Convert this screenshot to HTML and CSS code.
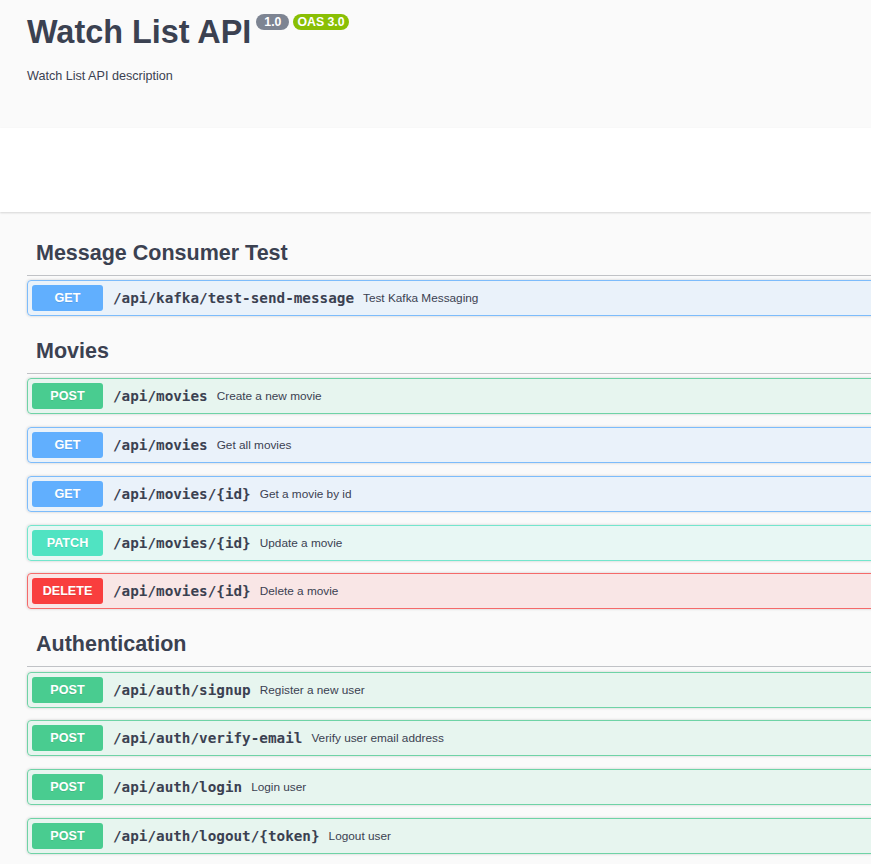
FILE: index.html
```html
<!DOCTYPE html>
<html lang="en">
<head>
<meta charset="utf-8">
<title>Watch List API</title>
<link rel="stylesheet" href="styles.css">
</head>
<body>
<div class="info">
  <h1 class="title"><span>Watch List API</span><span class="badge badge-version">1.0</span><span class="badge badge-oas">OAS 3.0</span></h1>
  <p class="desc">Watch List API description</p>
</div>
<div class="schemes"></div>
<main class="ops">
  <section class="tag-section">
    <h2 class="tag">Message Consumer Test</h2>
    <div class="opblock get"><span class="method">GET</span><span class="path">/api/kafka/test-send-message</span><span class="summary">Test Kafka Messaging</span></div>
  </section>
  <section class="tag-section">
    <h2 class="tag">Movies</h2>
    <div class="opblock post"><span class="method">POST</span><span class="path">/api/movies</span><span class="summary">Create a new movie</span></div>
    <div class="opblock get"><span class="method">GET</span><span class="path">/api/movies</span><span class="summary">Get all movies</span></div>
    <div class="opblock get"><span class="method">GET</span><span class="path">/api/movies/{id}</span><span class="summary">Get a movie by id</span></div>
    <div class="opblock patch"><span class="method">PATCH</span><span class="path">/api/movies/{id}</span><span class="summary">Update a movie</span></div>
    <div class="opblock delete"><span class="method">DELETE</span><span class="path">/api/movies/{id}</span><span class="summary">Delete a movie</span></div>
  </section>
  <section class="tag-section">
    <h2 class="tag">Authentication</h2>
    <div class="opblock post"><span class="method">POST</span><span class="path">/api/auth/signup</span><span class="summary">Register a new user</span></div>
    <div class="opblock post"><span class="method">POST</span><span class="path">/api/auth/verify-email</span><span class="summary">Verify user email address</span></div>
    <div class="opblock post"><span class="method">POST</span><span class="path">/api/auth/login</span><span class="summary">Login user</span></div>
    <div class="opblock post"><span class="method">POST</span><span class="path">/api/auth/logout/{token}</span><span class="summary">Logout user</span></div>
  </section>
</main>
</body>
</html>
```
FILE: styles.css
```css
html, body {
  margin: 0;
  padding: 0;
  overflow: hidden;
  background: #fafafa;
}

body {
  font-family: "Liberation Sans", Arial, Helvetica, sans-serif;
  color: #3b4151;
}

.info {
  background: #fafafa;
  height: 128px;
  box-sizing: border-box;
  padding: 14px 27px 0;
}

.title {
  margin: 0;
  display: flex;
  align-items: flex-start;
  font-size: 32.4px;
  line-height: 36px;
  font-weight: 700;
  color: #3b4151;
}

.badge {
  height: 16px;
  line-height: 16px;
  border-radius: 8px;
  font-size: 12.3px;
  font-weight: 700;
  color: #fff;
}

.badge-version {
  background: #7d8492;
  padding: 0 8px;
  margin-left: 5px;
}

.badge-oas {
  background: #89bf04;
  padding: 0 4px;
  margin-left: 4px;
}

.desc {
  margin: 16.7px 0 0;
  font-size: 12.6px;
  line-height: 18px;
}

.schemes {
  position: relative;
  background: #fff;
  height: 84px;
  box-shadow: 0 1px 2px 0 rgba(0, 0, 0, 0.15);
}

.ops {
  padding: 18.5px 0 0 27px;
  margin-right: -40px;
}

.tag {
  margin: 0 0 4.5px;
  padding: 9px 18px 9px 9px;
  font-size: 21.5px;
  line-height: 26px;
  font-weight: 700;
  border-bottom: 1px solid rgba(59, 65, 81, 0.3);
}

.opblock {
  display: flex;
  align-items: center;
  padding: 4px;
  border: 1px solid;
  border-radius: 4px;
  margin-bottom: 12.75px;
  box-shadow: 0 0 3px rgba(0, 0, 0, 0.19);
}

.method {
  flex: none;
  width: 71px;
  height: 26px;
  line-height: 26px;
  text-align: center;
  border-radius: 3px;
  color: #fff;
  font-weight: 700;
  font-size: 12.6px;
  text-shadow: 0 1px 0 rgba(0, 0, 0, 0.1);
}

.path {
  font-family: "DejaVu Sans Mono", "Liberation Mono", monospace;
  font-weight: 700;
  font-size: 14.3px;
  padding: 0 9px 0 10px;
  color: #3b4151;
}

.summary {
  font-size: 11.8px;
  color: #3b4151;
}

.get { border-color: #7dbcfb; background: rgba(97, 175, 254, 0.1); }
.get .method { background: #61affe; }

.post { border-color: #6fd3a6; background: rgba(73, 204, 144, 0.1); }
.post .method { background: #49cc90; }

.patch { border-color: #74e6cd; background: rgba(80, 227, 194, 0.1); }
.patch .method { background: #50e3c2; }

.delete { border-color: #f56a6a; background: rgba(249, 62, 62, 0.1); }
.delete .method { background: #f93e3e; }
```
